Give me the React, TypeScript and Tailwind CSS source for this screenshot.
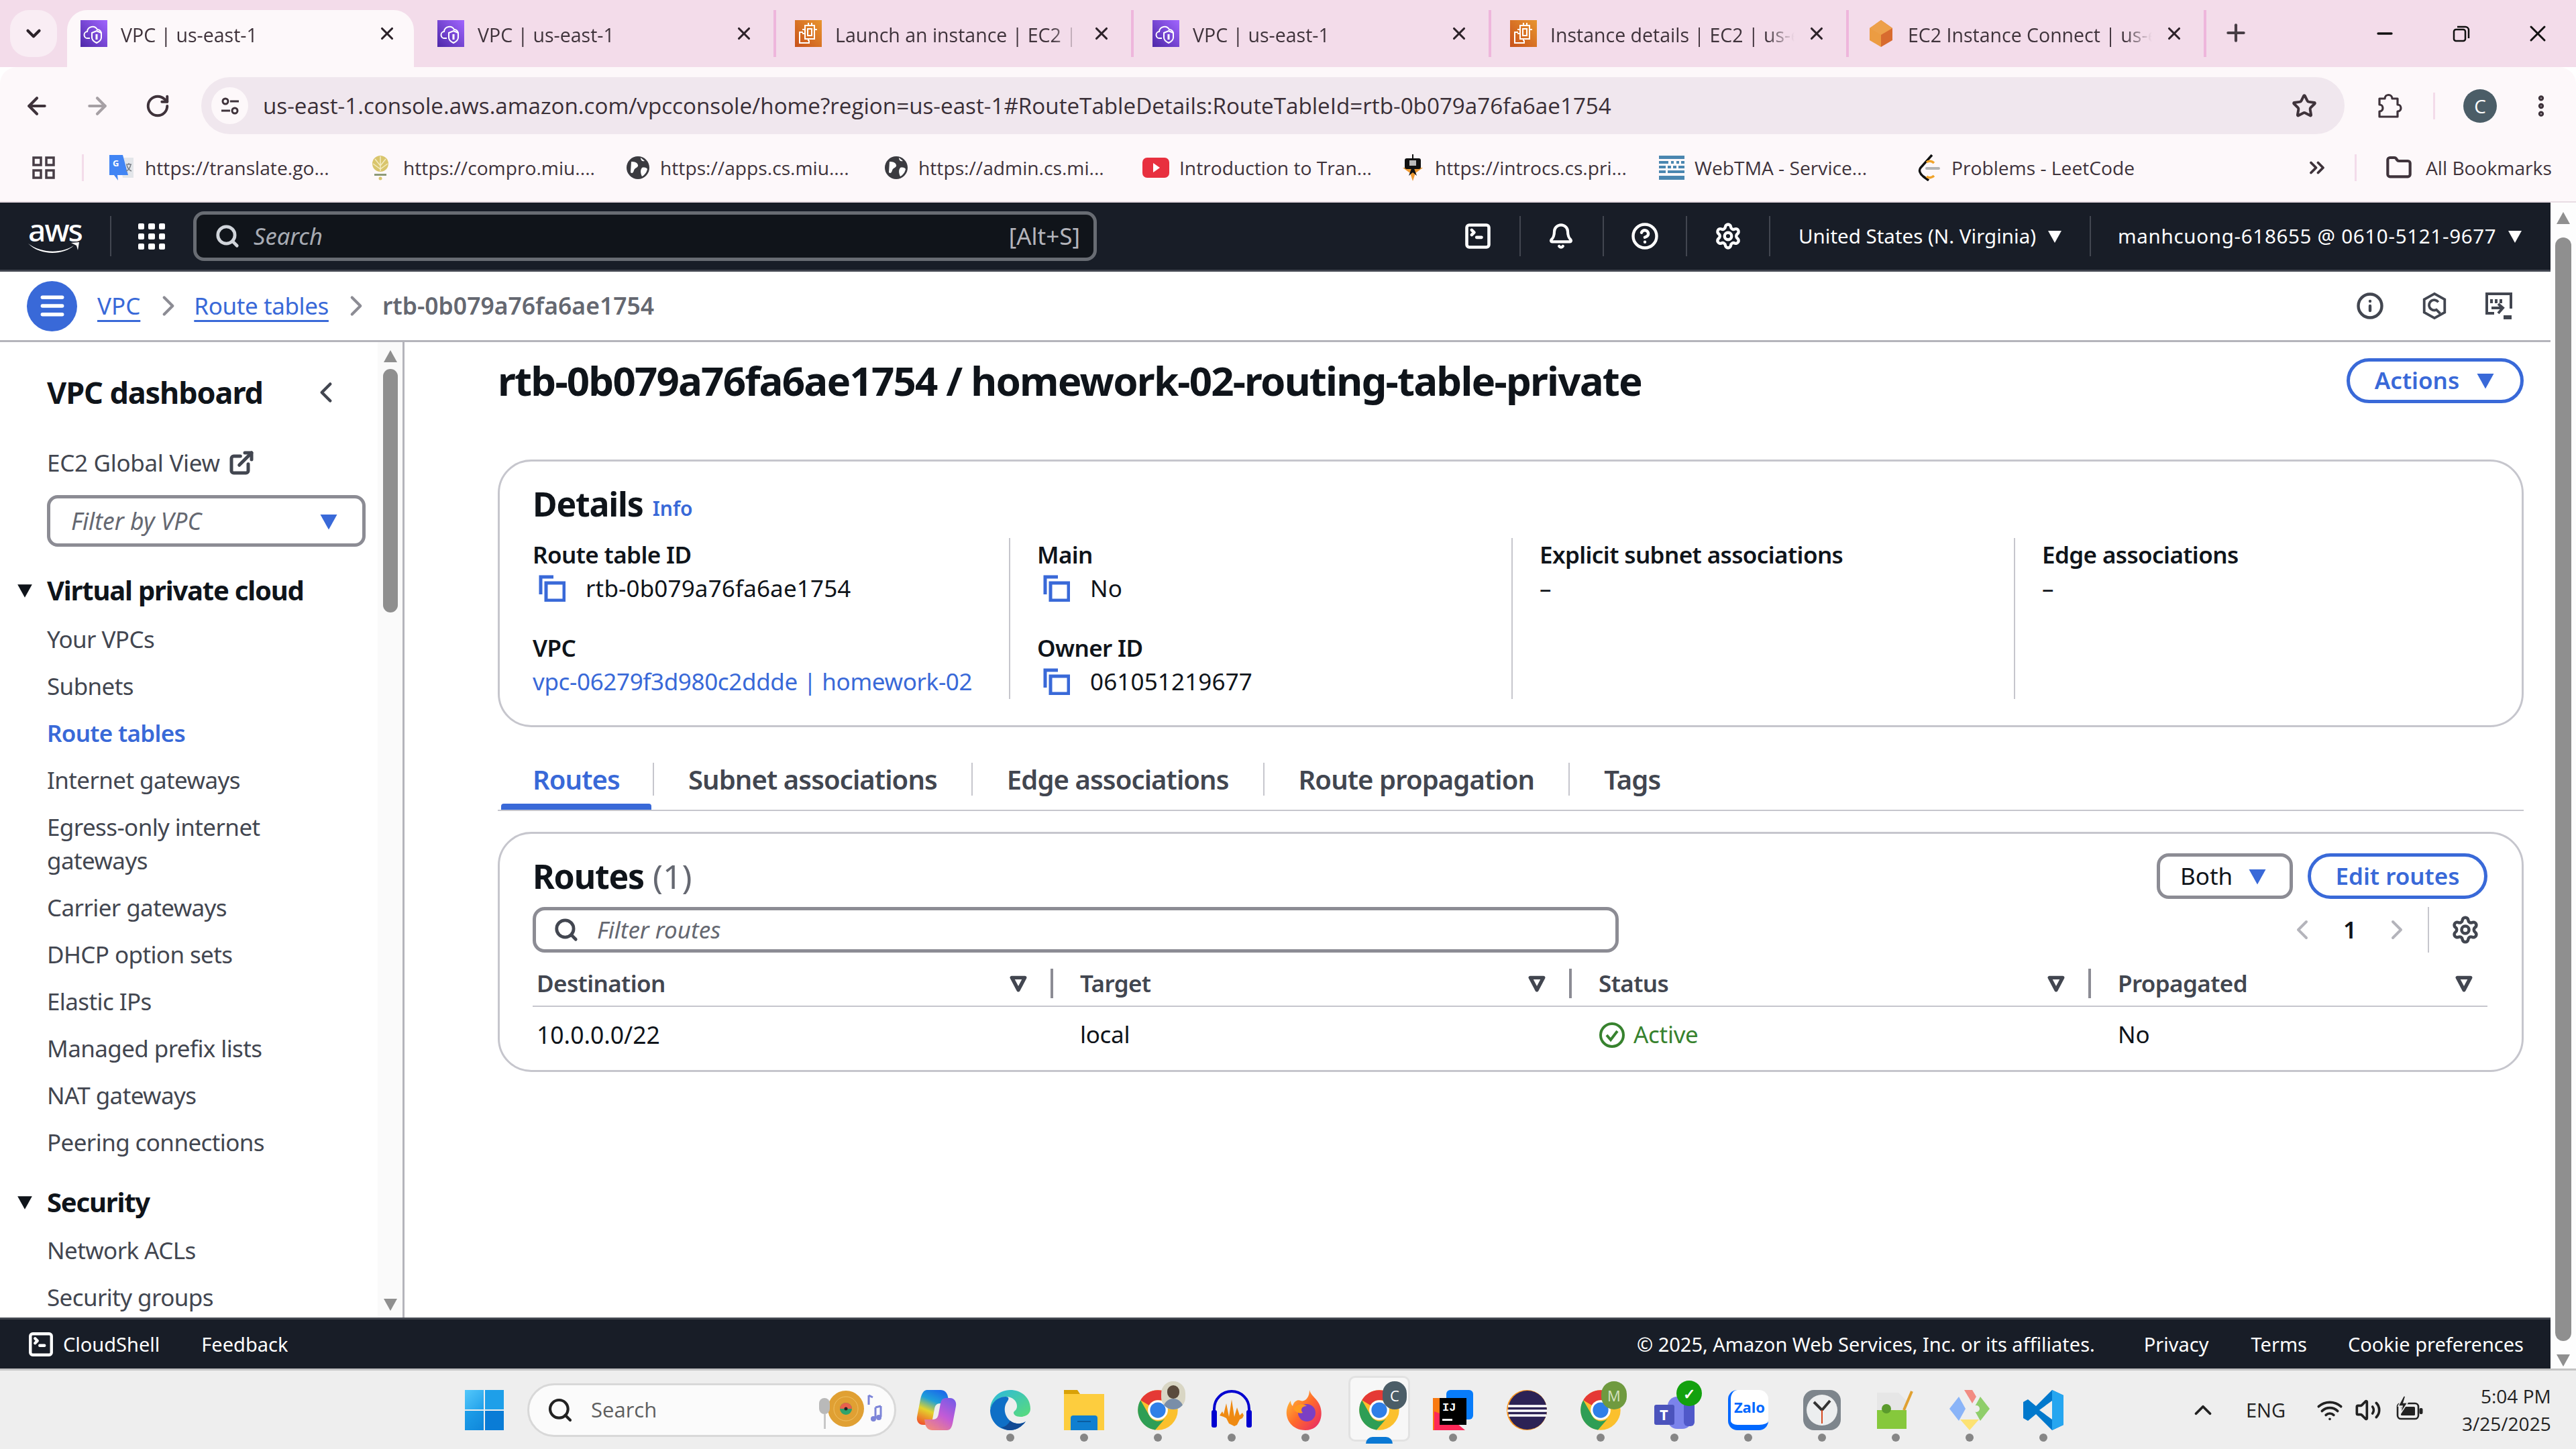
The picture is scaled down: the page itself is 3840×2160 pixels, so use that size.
import React from "react";
import {
    ArrowLeft, ArrowRight, Bell, ChevronLeft, ChevronRight, ChevronsRight, ChevronUp, ChevronDown,
    CircleHelp, EllipsisVertical, ExternalLink, Folder, Info, Menu, Plus, RotateCw, Search, Settings, SquareTerminal,
    Star, Volume2, Wifi, X, Minus,
} from "lucide-react";

const VpcIcon = () => (
    <svg viewBox="0 0 40 40" className="h-10 w-10 shrink-0">
        <defs>
            <linearGradient id="vpcg" x1="0" y1="1" x2="1" y2="0">
                <stop offset="0" stopColor="#4d27a8" />
                <stop offset="1" stopColor="#a166ff" />
            </linearGradient>
        </defs>
        <rect width="40" height="40" fill="url(#vpcg)" />
        <path d="M14 27H11a5 5 0 0 1-1-10 8 8 0 0 1 15-3 6 6 0 0 1 6 6" fill="none" stroke="#fff" strokeWidth="2" />
        <path d="M24 16l7 3v7c0 4-3 6-7 8-4-2-7-4-7-8v-7z" fill="none" stroke="#fff" strokeWidth="2" />
        <rect x="22.5" y="21" width="3" height="8" fill="#fff" />
    </svg>
);

const Ec2Icon = () => (
    <svg viewBox="0 0 40 40" className="h-10 w-10 shrink-0">
        <defs>
            <linearGradient id="ec2g" x1="0" y1="1" x2="1" y2="0">
                <stop offset="0" stopColor="#c8511b" />
                <stop offset="1" stopColor="#e8952f" />
            </linearGradient>
        </defs>
        <rect width="40" height="40" fill="url(#ec2g)" />
        <path d="M15 8h14v20H15z M20 4v4M25 4v4M20 28v3M11 14h4M11 20h4M29 14h4" fill="none" stroke="#fff" strokeWidth="2" />
        <path d="M12 18H7v16h14v-4" fill="none" stroke="#fff" strokeWidth="2" />
        <rect x="19" y="13" width="6" height="10" fill="none" stroke="#fff" strokeWidth="2" />
    </svg>
);

const CubeIcon = () => (
    <svg viewBox="0 0 40 40" className="h-10 w-10 shrink-0">
        <path d="M20 0L37 12V30L20 40z" fill="#d86b2f" />
        <path d="M20 0L3 12V30L20 40z" fill="#ec9c42" />
        <path d="M3 12L20 22 37 12 20 0z" fill="#eda04a" />
    </svg>
);

const GlobeIcon = () => (
    <svg viewBox="0 0 36 36" className="h-[36px] w-[36px] shrink-0">
        <circle cx="18" cy="18" r="17" fill="#3b3b40" />
        <path d="M8 9c5 0 9 1 10 5s-5 4-6 8-3 5-5 3M22 3c0 4 2 6 6 5M24 18c4-1 7 0 8 2-1 5-4 9-8 11-2-4-3-9 0-13z" fill="#fff" />
    </svg>
);

const AppsIcon = () => (
    <svg viewBox="0 0 34 34" className="h-[34px] w-[34px]" fill="none" stroke="#473d45" strokeWidth="3.5">
        <rect x="2" y="2" width="11" height="11" />
        <rect x="21" y="2" width="11" height="11" />
        <rect x="2" y="21" width="11" height="11" />
        <rect x="21" y="21" width="11" height="11" />
    </svg>
);

const TuneIcon = () => (
    <svg viewBox="0 0 30 30" className="h-[30px] w-[30px]" fill="none" stroke="#3f333b" strokeWidth="3">
        <circle cx="8" cy="8" r="4" />
        <path d="M15 8h13M2 22h13" />
        <circle cx="22" cy="22" r="4" />
    </svg>
);

const ExtensionIcon = () => (
    <svg viewBox="0 0 40 40" className="h-10 w-10" fill="none" stroke="#3f333b" strokeWidth="3.2" strokeLinejoin="round">
        <path d="M6 9h8a5.5 5.5 0 0 1 11 0h8v9a5 5 0 0 1 0 10v8H6v-8a5 5 0 0 0 0-10z" />
    </svg>
);

const BatteryIcon = () => (
    <svg viewBox="0 0 42 42" className="h-[42px] w-[42px]">
        <rect x="3" y="11" width="31" height="23" rx="5" fill="none" stroke="#222" strokeWidth="2.6" />
        <rect x="8" y="16" width="21" height="13" rx="1.5" fill="#222" />
        <rect x="35.5" y="18" width="5" height="9" rx="2" fill="#222" />
        <path d="M12 0L4 15h6l-3 12 11-17h-6l3-10z" fill="#222" stroke="#eee" strokeWidth="1.5" />
    </svg>
);

const BOOKMARK_ICONS = [
    <svg key="gt" viewBox="0 0 38 38" className="h-[38px] w-[38px] shrink-0">
        <path d="M14 4h22v30H20z" fill="#e3e6ea" />
        <path d="M0 0h20l8 30H12l1 8-6-8H0z" fill="#4285f4" />
        <text x="5" y="17" fontSize="13" fill="#fff" fontFamily="Noto Sans" fontWeight="700">G</text>
        <path d="M25 14h8M29 12v2M32 14c-1 5-4 9-7 10M26 15c1 4 4 8 7 9" fill="none" stroke="#7b8088" strokeWidth="1.5" />
    </svg>,
    <svg key="cp" viewBox="0 0 38 38" className="h-[38px] w-[38px] shrink-0">
        <circle cx="19" cy="13" r="12" fill="#d9c56c" />
        <path d="M19 2v22M11 6l8 10 8-10M8 13l11 8 11-8" stroke="#f4ecc2" strokeWidth="1.5" fill="none" />
        <rect x="10" y="28" width="18" height="3" fill="#8d9a78" />
        <circle cx="19" cy="35" r="2.5" fill="#d9c56c" />
    </svg>,
    <GlobeIcon key="g1" />,
    <GlobeIcon key="g2" />,
    <svg key="yt" viewBox="0 0 40 36" className="h-[36px] w-[40px] shrink-0">
        <rect y="3" width="40" height="30" rx="7" fill="#e8303f" />
        <path d="M16 11l10 7-10 7z" fill="#fff" />
    </svg>,
    <svg key="rk" viewBox="0 0 36 40" className="h-10 w-[36px] shrink-0">
        <path d="M3 20h30l-11 8 -4 12 -4-12z" fill="#ee9a32" />
        <path d="M18 16l6 16-6-5-6 5z" fill="#111" />
        <rect x="6" y="6" width="24" height="16" rx="3" fill="#111" />
        <rect x="13" y="9" width="10" height="8" fill="#bbb" />
        <rect x="17" y="0" width="2" height="6" fill="#111" />
    </svg>,
    <svg key="tm" viewBox="0 0 38 36" className="h-[36px] w-[38px] shrink-0" fill="#4a86b0">
        <rect width="38" height="5" />
        <path d="M0 8h14v4H0zM18 8h4v4h-4zM26 8h4v4h-4zM33 8h5v4h-5zM0 15h10v4H0zM13 15h5v4h-5zM21 15h5v4h-5zM29 15h9v4h-9zM0 22h10v4H0zM13 22h25v4H13zM0 30h38v6H0z" />
    </svg>,
    <svg key="lc" viewBox="0 0 36 40" className="h-10 w-[36px] shrink-0">
        <path d="M22 1L5 20c-3 4-1 9 4 13l8 6" fill="none" stroke="#111" strokeWidth="3.5" />
        <path d="M14 33c3 3 8 2 11-1" fill="none" stroke="#f0a32a" strokeWidth="3.5" />
        <path d="M14 12c3-3 8-2 11 1" fill="none" stroke="#f0a32a" strokeWidth="3.5" />
        <rect x="12" y="19" width="22" height="4" rx="2" fill="#b3b3b3" />
    </svg>,
];

const TABS: [React.ReactNode, string][] = [
    [<VpcIcon key="a" />, "VPC | us-east-1"],
    [<VpcIcon key="b" />, "VPC | us-east-1"],
    [<Ec2Icon key="c" />, "Launch an instance | EC2 | us-east-1"],
    [<VpcIcon key="d" />, "VPC | us-east-1"],
    [<Ec2Icon key="e" />, "Instance details | EC2 | us-east-1"],
    [<CubeIcon key="f" />, "EC2 Instance Connect | us-east-1"],
];

const BOOKMARKS = [
    "https://translate.go...",
    "https://compro.miu....",
    "https://apps.cs.miu....",
    "https://admin.cs.mi...",
    "Introduction to Tran...",
    "https://introcs.cs.pri...",
    "WebTMA - Service...",
];

function tabClass(i: number) {
    if (i === 0) return "flex h-[85px] w-[517px] items-center self-start rounded-t-[30px] bg-[#fdf8fa] pb-[15px] pl-[20px]";
    if (i === 1) return "ml-[15px] flex h-[70px] w-[525px] items-center border-r-[4px] border-[#eeb6dc] pl-[20px]";
    return "flex h-[70px] w-[533px] items-center border-r-[4px] border-[#eeb6dc] pl-[28px]";
}

const TabStrip = () => (
    <div className="flex h-[100px] shrink-0 items-start bg-[#f3dcea] pl-[15px] pt-[15px] font-['Open_Sans',sans-serif] text-[28.5px] text-[#3f333b]">
        <div className="flex h-[70px] w-[70px] items-center justify-center rounded-[28px] bg-[#f9edf4]">
            <ChevronDown size={34} strokeWidth={3} color="#2c2229" />
        </div>
        <div className="ml-[15px] flex h-[85px]">
            {TABS.map(([icon, title], i) => (
                <div key={i} className={tabClass(i)}>
                    {icon}
                    <span className="ml-5 mt-[4px] w-[379px] overflow-hidden whitespace-nowrap [mask-image:linear-gradient(to_right,black_85%,transparent_96%)]">{title}</span>
                    <X size={30} strokeWidth={2.5} color="#2c2229" className="ml-[3px] shrink-0" />
                </div>
            ))}
            <div className="flex w-[86px] items-start pl-[24px] pt-[14px]">
                <Plus size={40} strokeWidth={2.5} color="#473d45" />
            </div>
        </div>
        <div className="ml-auto flex h-[70px] items-center">
            <div className="flex w-[114px] justify-center"><Minus size={34} strokeWidth={2.5} color="#111" /></div>
            <div className="flex w-[114px] justify-center">
                <svg viewBox="0 0 30 30" className="h-[30px] w-[30px]" fill="none" stroke="#111" strokeWidth="2.5">
                    <rect x="4" y="9" width="17" height="17" rx="3" />
                    <path d="M9 5h12a5 5 0 0 1 5 5v12" />
                </svg>
            </div>
            <div className="flex w-[114px] justify-center"><X size={40} strokeWidth={1.8} color="#111" /></div>
        </div>
    </div>
);

const Toolbar = () => (
    <div className="flex h-[100px] shrink-0 items-start rounded-t-[25px] bg-[#fdf8fa] pt-[15px] font-['Open_Sans',sans-serif]">
        <div className="flex h-[85px] w-[300px] items-center text-[#3f333b]">
            <div className="flex w-[110px] justify-center"><ArrowLeft size={40} strokeWidth={2.5} color="#3f333b" /></div>
            <div className="flex w-[70px] justify-center"><ArrowRight size={40} strokeWidth={2.5} color="#a6a0a4" /></div>
            <div className="flex w-[110px] justify-center"><RotateCw size={38} strokeWidth={2.5} color="#3f333b" /></div>
        </div>
        <div className="flex h-[85px] w-[3195px] items-center rounded-full bg-[#f0e7ee] pl-[15px]">
            <div className="flex h-[55px] w-[55px] items-center justify-center rounded-full bg-[#fdf8fa]"><TuneIcon /></div>
            <span className="ml-[22px] whitespace-nowrap text-[33.2px] text-[#3a2f37]">us-east-1.console.aws.amazon.com/vpcconsole/home?region=us-east-1#RouteTableDetails:RouteTableId=rtb-0b079a76fa6ae1754</span>
            <Star size={38} strokeWidth={2.5} color="#3f333b" className="ml-auto mr-[41px]" />
        </div>
        <div className="flex h-[85px] flex-1 items-center">
            <div className="flex w-[132px] justify-center"><ExtensionIcon /></div>
            <div className="h-[40px] w-[3px] bg-[#f3dcea]" />
            <div className="ml-[42px] flex h-[50px] w-[50px] items-center justify-center rounded-full bg-[#4b5d67] text-[28px] text-white">C</div>
            <EllipsisVertical size={40} strokeWidth={3} color="#3f333b" className="ml-[46px]" />
        </div>
    </div>
);

const Bookmarks = () => (
    <div className="flex h-[100px] shrink-0 items-center bg-[#fdf8fa] pl-[48px] font-['Open_Sans',sans-serif] text-[28.2px] text-[#3f333b]">
        <AppsIcon />
        <div className="ml-[40px] mr-[38px] h-[40px] w-[3px] bg-[#f3dcea]" />
        {BOOKMARKS.map((b, i) => (
            <div key={b} className="flex w-[385px] items-center gap-[15px]">
                {BOOKMARK_ICONS[i]}
                <span className="whitespace-nowrap">{b}</span>
            </div>
        ))}
        <div className="flex w-[300px] items-center gap-[15px]">
            {BOOKMARK_ICONS[7]}
            <span className="whitespace-nowrap">Problems - LeetCode</span>
        </div>
        <ChevronsRight size={36} strokeWidth={2.5} color="#3f333b" className="ml-[278px]" />
        <div className="ml-[38px] h-[40px] w-[3px] bg-[#f3dcea]" />
        <Folder size={40} strokeWidth={2.5} color="#3f333b" className="ml-[43px]" />
        <span className="ml-[20px] whitespace-nowrap">All Bookmarks</span>
    </div>
);

const Caret = ({ className }: { className: string }) => (
    <svg viewBox="0 0 24 24" className={className}>
        <path d="M2 4h20L12 22z" />
    </svg>
);

const AwsBar = () => (
    <div className="flex h-[103px] shrink-0 items-center border-b-[3px] border-[#424650] bg-[#181d27] text-[29.5px] text-white">
        <div className="relative ml-[40px] flex h-[56px] w-[84px] flex-col items-center">
            <span className="text-[46px] font-medium leading-[36px] tracking-[-2px]">aws</span>
            <svg viewBox="0 0 80 20" className="absolute bottom-0 left-0 w-[80px]">
                <path d="M2 3c20 15 50 15 68 3-14 14-50 16-68-3zM66 2l12-1-2 12-2-7z" fill="#fff" />
            </svg>
        </div>
        <div className="ml-[40px] h-[60px] w-[2px] bg-[#424650]" />
        <div className="ml-[40px] grid w-[40px] grid-cols-3 gap-[6px]">
            {[0, 1, 2, 3, 4, 5, 6, 7, 8].map((n) => <div key={n} className="h-[9px] rounded-[2px] bg-white" />)}
        </div>
        <div className="ml-[42px] flex h-[74px] w-[1347px] items-center rounded-[16px] border-[5px] border-[#686c73] bg-[#10141a] pl-[27px] pr-[20px] text-[#b4b4bb]">
            <Search size={38} strokeWidth={3} color="#d1d5db" />
            <span className="ml-[20px] text-[34.5px] italic text-[#a7abb3]">Search</span>
            <span className="ml-auto text-[35px]">[Alt+S]</span>
        </div>
        <SquareTerminal size={44} strokeWidth={2.5} className="ml-[546px]" />
        <div className="ml-[40px] h-[60px] w-[2px] bg-[#424650]" />
        <Bell size={40} strokeWidth={2.5} className="ml-[40px]" />
        <div className="ml-[42px] h-[60px] w-[2px] bg-[#424650]" />
        <CircleHelp size={42} strokeWidth={2.5} className="ml-[40px]" />
        <div className="ml-[40px] h-[60px] w-[2px] bg-[#424650]" />
        <Settings size={42} strokeWidth={2.5} className="ml-[40px]" />
        <div className="ml-[40px] h-[60px] w-[2px] bg-[#424650]" />
        <span className="ml-[42px] whitespace-nowrap">United States (N. Virginia)</span>
        <Caret className="ml-[16px] w-[24px] fill-white" />
        <div className="ml-[40px] h-[60px] w-[2px] bg-[#424650]" />
        <span className="ml-[40px] whitespace-nowrap tracking-[0.7px]">manhcuong-618655 @ 0610-5121-9677</span>
        <Caret className="ml-[16px] w-[24px] fill-white" />
    </div>
);

const Breadcrumb = () => (
    <div className="flex h-[105px] shrink-0 items-center border-b-[3px] border-[#b4b4bb] bg-white pl-[40px] text-[35px]">
        <div className="flex h-[75px] w-[75px] items-center justify-center rounded-full bg-[#3969d8]">
            <Menu size={44} strokeWidth={3} color="#fff" />
        </div>
        <span className="ml-[30px] text-[#3969d8] underline decoration-[3px] underline-offset-[8px]">VPC</span>
        <ChevronRight size={50} strokeWidth={2} color="#8c8c94" className="ml-[17px]" />
        <span className="ml-[13px] tracking-[-0.4px] text-[#3969d8] underline decoration-[3px] underline-offset-[8px]">Route tables</span>
        <ChevronRight size={50} strokeWidth={2} color="#8c8c94" className="ml-[16px]" />
        <span className="ml-[14px] text-[35.5px] font-semibold text-[#656871]">rtb-0b079a76fa6ae1754</span>
        <Info size={42} strokeWidth={2.5} color="#424650" className="ml-auto" />
        <svg viewBox="0 0 40 44" className="ml-[55px] h-[42px] w-[40px]" fill="none" stroke="#424650" strokeWidth="4">
            <path d="M20 3l16 9v20l-16 9-16-9V12z" />
            <path d="M26 16a8 8 0 1 0-3 12l6 6" />
        </svg>
        <svg viewBox="0 0 42 42" className="ml-[55px] mr-[56px] h-[42px] w-[42px]" fill="none" stroke="#424650" strokeWidth="4">
            <path d="M14 32H3V3h36v22" />
            <path d="M10 11v6M17 11v6M24 11v6" />
            <path d="M10 24h16M20 18l7 6-7 8" />
            <path d="M28 38h12" strokeWidth="6" />
        </svg>
    </div>
);

const NavItem = ({ children, active }: { children: React.ReactNode; active?: boolean }) => (
    <div className={active ? "mb-[20px] ml-[46px] font-semibold leading-[50px] tracking-[-0.7px] text-[#3969d8]" : "mb-[20px] ml-[46px] leading-[50px] tracking-[-0.6px] text-[#424650]"}>{children}</div>
);

const Sidebar = () => (
    <div className="flex w-[603px] shrink-0 overflow-hidden border-r-[3px] border-[#b4b4bb]">
        <div className="w-[563px] shrink-0 pl-[24px] text-[35px]">
            <div className="ml-[46px] mr-[50px] mt-[50px] flex h-[50px] items-center justify-between">
                <span className="text-[45px] font-bold tracking-[-1.1px] text-[#0f141a]">VPC dashboard</span>
                <ChevronLeft size={50} strokeWidth={2.2} color="#424650" className="mr-[2px]" />
            </div>
            <div className="ml-[46px] mt-[55px] flex h-[50px] items-center gap-[12px] tracking-[-0.3px] text-[#424650]">
                EC2 Global View
                <ExternalLink size={40} strokeWidth={3} color="#424650" />
            </div>
            <div className="ml-[46px] mt-[23px] flex h-[77px] w-[475px] items-center rounded-[16px] border-[5px] border-[#8c8c94] pl-[31px] pr-[35px] text-[35.5px] italic text-[#656871]">
                Filter by VPC
                <Caret className="ml-auto w-[30px] fill-[#3969d8]" />
            </div>
            <div className="mb-[23px] mt-[40px] flex h-[50px] items-center text-[40px] font-bold tracking-[-1.2px] text-[#0f141a]">
                <Caret className="mr-[20px] w-[26px] fill-[#0f141a]" />
                Virtual private cloud
            </div>
            <NavItem>Your VPCs</NavItem>
            <NavItem>Subnets</NavItem>
            <NavItem active>Route tables</NavItem>
            <NavItem>Internet gateways</NavItem>
            <NavItem>Egress-only internet<br />gateways</NavItem>
            <NavItem>Carrier gateways</NavItem>
            <NavItem>DHCP option sets</NavItem>
            <NavItem>Elastic IPs</NavItem>
            <NavItem>Managed prefix lists</NavItem>
            <NavItem>NAT gateways</NavItem>
            <NavItem>Peering connections</NavItem>
            <div className="mb-[22px] mt-[39px] flex h-[50px] items-center text-[40px] font-bold tracking-[-1.2px] text-[#0f141a]">
                <Caret className="mr-[20px] w-[26px] fill-[#0f141a]" />
                Security
            </div>
            <NavItem>Network ACLs</NavItem>
            <NavItem>Security groups</NavItem>
        </div>
        <div className="flex w-[37px] flex-col items-center bg-[#fafafa] pt-[10px]">
            <Caret className="w-[24px] rotate-180 fill-[#8f8f8f]" />
            <div className="mt-[6px] h-[363px] w-[22px] rounded-full bg-[#8f8f8f]" />
            <Caret className="mb-[8px] mt-auto w-[24px] fill-[#8f8f8f]" />
        </div>
    </div>
);

const CopyIcon = () => (
    <svg viewBox="0 0 40 40" className="h-10 w-10 shrink-0" fill="none" stroke="#3969d8" strokeWidth="5">
        <path d="M22 3H3v26" />
        <rect x="11" y="12" width="27" height="26" />
    </svg>
);

const DetailCol = ({ first, children }: { first?: boolean; children: React.ReactNode }) => (
    <div className={first ? "pr-[20px]" : "border-l-2 border-[#c6c6cd] pl-[40px]"}>{children}</div>
);

const Label = ({ children }: { children: React.ReactNode }) => <div className="text-[35px] font-semibold leading-[50px] tracking-[-0.6px] text-[#0f141a]">{children}</div>;

const CopyValue = ({ children }: { children: React.ReactNode }) => (
    <div className="flex h-[50px] items-center pl-[9px] text-[#0f141a]">
        <CopyIcon />
        <span className="ml-[30px] tracking-[0.15px]">{children}</span>
    </div>
);

const DetailsCard = () => (
    <div className="mt-[78px] h-[399px] rounded-[50px] border-[3px] border-[#c6c6cd] pl-[49px] text-[35px]">
        <div className="flex h-[81px] items-center pt-[45px]">
            <span className="text-[50px] font-bold leading-none tracking-[-1.2px] text-[#0f141a]">Details</span>
            <span className="ml-[14px] mt-[12px] text-[30px] font-semibold text-[#3969d8]">Info</span>
        </div>
        <div className="mt-[33px] grid h-[240px] grid-cols-[710px_749px_749px_1fr]">
            <DetailCol first>
                <Label>Route table ID</Label>
                <CopyValue>rtb-0b079a76fa6ae1754</CopyValue>
                <div className="mt-[39px]"><Label>VPC</Label></div>
                <div className="whitespace-nowrap leading-[50px] tracking-[-0.35px] text-[#3969d8]">vpc-06279f3d980c2ddde | homework-02</div>
            </DetailCol>
            <DetailCol>
                <Label>Main</Label>
                <CopyValue>No</CopyValue>
                <div className="mt-[39px]"><Label>Owner ID</Label></div>
                <CopyValue>061051219677</CopyValue>
            </DetailCol>
            <DetailCol>
                <Label>Explicit subnet associations</Label>
                <div className="leading-[50px] text-[#0f141a]">–</div>
            </DetailCol>
            <DetailCol>
                <Label>Edge associations</Label>
                <div className="leading-[50px] text-[#0f141a]">–</div>
            </DetailCol>
        </div>
    </div>
);

const TabsRow = () => (
    <div className="mt-[41px] flex h-[84px] border-b-2 border-[#c6c6cd] text-[40px] font-semibold tracking-[-0.9px] text-[#424650]">
        <div className="flex w-[233px] flex-col">
            <div className="flex h-[73px] items-center">
                <div className="flex h-[49px] w-full items-center border-r-2 border-[#c6c6cd] pl-[52px] text-[#3969d8]">Routes</div>
            </div>
            <div className="ml-[5px] mr-[4px] h-[9px] rounded-t-[4px] bg-[#3969d8]" />
        </div>
        {["Subnet associations", "Edge associations", "Route propagation"].map((t) => (
            <div key={t} className="flex h-[73px] items-center">
                <div className="flex h-[49px] items-center whitespace-nowrap border-r-2 border-[#c6c6cd] px-[51px]">{t}</div>
            </div>
        ))}
        <div className="flex h-[73px] items-center pl-[51px]">Tags</div>
    </div>
);

const SortIcon = () => (
    <svg viewBox="0 0 24 24" className="h-[26px] w-[26px] shrink-0" fill="none" stroke="#424650" strokeWidth="5" strokeLinejoin="round">
        <path d="M3 4h18L12 21z" />
    </svg>
);

const HeaderCell = ({ first, pr, children }: { first?: boolean; pr: string; children: React.ReactNode }) => (
    <div className={first ? `flex h-[44px] items-center justify-between pl-[6px] ${pr}` : `flex h-[44px] items-center justify-between ${pr}`}>
        {!first && <div className="mr-[40px] h-[44px] w-[4px] shrink-0 bg-[#8c8c94]" />}
        <span className="mr-auto">{children}</span>
        <SortIcon />
    </div>
);

const RoutesCard = () => (
    <div className="mt-[31px] h-[358px] rounded-[50px] border-[3px] border-[#c6c6cd] pl-[49px] pr-[51px] pt-[29px] text-[35px]">
        <div className="flex h-[68px] items-center">
            <span className="text-[50px] font-bold tracking-[-1.2px] text-[#0f141a]">Routes</span>
            <span className="ml-[13px] text-[50px] text-[#656871]">(1)</span>
            <div className="ml-auto flex h-[68px] w-[203px] items-center rounded-[18px] border-[5px] border-[#8c8c94] pl-[30px] text-[#0f141a]">
                Both
                <Caret className="ml-[22px] w-[30px] fill-[#3969d8]" />
            </div>
            <div className="ml-[22px] flex h-[68px] w-[268px] items-center justify-center rounded-full border-[5px] border-[#3969d8] font-semibold text-[#3969d8]">Edit routes</div>
        </div>
        <div className="mt-[12px] flex h-[68px] items-center">
            <div className="flex h-[68px] w-[1619px] items-center rounded-[18px] border-[5px] border-[#8c8c94] pl-[26px] italic text-[#656871]">
                <Search size={38} strokeWidth={3} color="#424650" />
                <span className="ml-[27px] text-[35px]">Filter routes</span>
            </div>
            <ChevronLeft size={48} strokeWidth={2} color="#b4b4bb" className="ml-auto" />
            <span className="ml-[37px] font-semibold text-[#0f141a]">1</span>
            <ChevronRight size={48} strokeWidth={2} color="#b4b4bb" className="ml-[36px]" />
            <div className="ml-[22px] h-[68px] w-[2px] bg-[#c6c6cd]" />
            <Settings size={44} strokeWidth={2.5} color="#424650" className="ml-[32px] mr-[11px]" />
        </div>
        <div className="mt-[24px] grid h-[57px] grid-cols-[772px_773px_774px_1fr] items-start border-b-2 border-[#c6c6cd] font-semibold tracking-[-0.6px] text-[#424650]">
            <HeaderCell first pr="pr-[35px]">Destination</HeaderCell>
            <HeaderCell pr="pr-[35px]">Target</HeaderCell>
            <HeaderCell pr="pr-[35px]">Status</HeaderCell>
            <HeaderCell pr="pr-[22px]">Propagated</HeaderCell>
        </div>
        <div className="grid h-[80px] grid-cols-[772px_773px_774px_1fr] items-center pt-[3px] text-[#0f141a]">
            <div className="pl-[6px] text-[35.5px]">10.0.0.0/22</div>
            <div className="pl-[44px] tracking-[-0.3px]">local</div>
            <div className="flex items-center gap-[12px] pl-[44px] tracking-[-0.3px] text-[#37822e]">
                <svg viewBox="0 0 40 40" className="h-10 w-10" fill="none" stroke="#37822e" strokeWidth="4">
                    <circle cx="20" cy="20" r="17" />
                    <path d="M12 20l6 7 10-13" />
                </svg>
                Active
            </div>
            <div className="pl-[44px]">No</div>
        </div>
    </div>
);

const Main = () => (
    <div className="min-w-0 flex-1 bg-white pl-[139px] pr-[40px] pt-[17px]">
        <div className="flex h-[80px] items-center justify-between">
            <span className="whitespace-nowrap text-[60px] font-bold tracking-[-1.8px] text-[#0f141a]">rtb-0b079a76fa6ae1754 / homework-02-routing-table-private</span>
            <div className="flex h-[67px] w-[264px] items-center justify-center gap-[24px] rounded-full border-[5px] border-[#3969d8] text-[35px] font-semibold text-[#3969d8]">
                Actions
                <Caret className="w-[30px] fill-[#3969d8]" />
            </div>
        </div>
        <DetailsCard />
        <TabsRow />
        <RoutesCard />
    </div>
);

const Footer = () => (
    <div className="flex h-[76px] shrink-0 items-center border-t-[3px] border-[#424650] bg-[#181d27] pl-[40px] pr-[40px] text-[29px] text-white">
        <SquareTerminal size={42} strokeWidth={2.5} />
        <span className="ml-[12px]">CloudShell</span>
        <span className="ml-[62px]">Feedback</span>
        <span className="ml-auto">© 2025, Amazon Web Services, Inc. or its affiliates.</span>
        <span className="ml-[73px]">Privacy</span>
        <span className="ml-[63px]">Terms</span>
        <span className="ml-[61px]">Cookie preferences</span>
    </div>
);

const Chrome = () => (
    <svg viewBox="0 0 48 48" className="h-[62px] w-[62px]">
        <circle cx="24" cy="24" r="23" fill="#fbc02d" />
        <path d="M24 1a23 23 0 0 1 20 11.5H24a11.5 11.5 0 0 0-10 6L4 12.5A23 23 0 0 1 24 1z" fill="#e53935" />
        <path d="M4 12.5A23 23 0 0 0 21 46.8L32 34a11.5 11.5 0 0 1-18-4z" fill="#2e9e55" />
        <circle cx="24" cy="24" r="11.5" fill="#fff" />
        <circle cx="24" cy="24" r="9" fill="#2f7fe8" />
    </svg>
);

const TaskIcon = ({ children, dot = true }: { children: React.ReactNode; dot?: boolean }) => (
    <div className="relative flex h-full w-[110px] shrink-0 flex-col items-center justify-center">
        {children}
        {dot && <div className="absolute bottom-[11px] h-[12px] w-[12px] rounded-full bg-[#868686]" />}
    </div>
);

const Taskbar = () => (
    <div className="flex h-[120px] shrink-0 items-center border-t-[3px] border-[#c4c4c4] bg-[#eeeeee] pl-[693px] font-['Open_Sans',sans-serif]">
        <div className="grid h-[60px] w-[58px] grid-cols-2 grid-rows-2 gap-[2px]">
            <div className="bg-gradient-to-br from-[#52c8fb] to-[#1ea0ea]" />
            <div className="bg-[#1e9fe9]" />
            <div className="bg-gradient-to-br from-[#1ea0ea] to-[#0f86da]" />
            <div className="bg-[#0a7cd6]" />
        </div>
        <div className="ml-[35px] flex h-[80px] w-[550px] items-center rounded-full border-[3px] border-[#d8d8d8] bg-[#fbfbfb] pl-[26px]">
            <Search size={40} strokeWidth={2.5} color="#222" />
            <span className="ml-[26px] text-[31px] text-[#5f5f5f]">Search</span>
            <svg viewBox="0 0 110 60" className="ml-auto mr-[10px] h-[60px] w-[110px]">
                <circle cx="48" cy="28" r="27" fill="#e0a033" />
                <circle cx="48" cy="28" r="18" fill="none" stroke="#f0c060" />
                <circle cx="48" cy="28" r="9" fill="#2fa36b" />
                <path d="M39 28a9 9 0 0 1 18 0z" fill="#e8604c" />
                <circle cx="48" cy="28" r="2.5" fill="#222" />
                <rect x="8" y="12" width="16" height="24" rx="8" fill="#b9b9b9" />
                <rect x="15" y="36" width="3" height="22" fill="#c8c8c8" />
                <path d="M82 8v14M82 8l6 3M92 26v16M100 24v16M92 26l8-2" fill="none" stroke="#7c84d8" strokeWidth="3" />
                <circle cx="89" cy="43" r="4" fill="#7c84d8" />
                <circle cx="97" cy="41" r="4" fill="#7c84d8" />
            </svg>
        </div>
        <div className="ml-[5px] flex h-full items-center">
            <TaskIcon dot={false}>
                <svg viewBox="0 0 60 60" className="h-[60px] w-[60px]">
                    <defs>
                        <linearGradient id="cpa" x1="0.6" y1="0" x2="0.2" y2="1">
                            <stop offset="0" stopColor="#1b6fe8" />
                            <stop offset=".3" stopColor="#1fa0d8" />
                            <stop offset=".6" stopColor="#e4d32c" />
                            <stop offset="1" stopColor="#f0552c" />
                        </linearGradient>
                        <linearGradient id="cpb" x1="0.8" y1="0" x2="0.2" y2="1">
                            <stop offset="0" stopColor="#7a5be6" />
                            <stop offset=".5" stopColor="#c35bd6" />
                            <stop offset="1" stopColor="#f28a7c" />
                        </linearGradient>
                    </defs>
                    <path d="M16 0h20c6 0 10 4 11 10l2 10H36c-6 0-8 3-9 8l-3 16c-1 6-4 8-9 8H10C3 52 0 46 1 40l5-26C8 5 11 0 16 0z" fill="url(#cpa)" />
                    <path d="M44 60H24c-6 0-10-4-11-10l-1-6h12c6 0 8-3 9-8l3-16c1-6 4-8 9-8h5c7 0 10 6 9 12l-5 26c-2 9-5 10-10 10z" fill="url(#cpb)" />
                </svg>
            </TaskIcon>
            <TaskIcon>
                <svg viewBox="0 0 60 60" className="h-[60px] w-[60px]">
                    <defs>
                        <linearGradient id="edg" x1="0" y1="0" x2="1" y2="1">
                            <stop offset="0" stopColor="#2bb8e0" />
                            <stop offset="1" stopColor="#5bdc78" />
                        </linearGradient>
                    </defs>
                    <path d="M30 0c18 0 30 13 30 28 0 8-7 12-15 12-6 0-10-3-10-6 0-3 5-3 5-10 0-8-7-14-17-14C12 10 2 20 0 30 0 14 12 0 30 0z" fill="url(#edg)" />
                    <path d="M0 30c2-12 12-20 23-20 6 0 5 4 2 8-6 8-4 24 8 30 6 3 14 3 20-1-6 8-14 13-23 13C12 60 0 46 0 30z" fill="#0f6fc6" />
                    <path d="M30 46c8 6 18 5 23 1-6 8-14 13-23 13-6 0-10-2-14-5 6 1 10-3 14-9z" fill="#114a94" />
                </svg>
            </TaskIcon>
            <TaskIcon>
                <svg viewBox="0 0 60 60" className="h-[60px] w-[60px]">
                    <path d="M0 0h20l4 6h36v8H0z" fill="#d9a106" />
                    <path d="M0 6h60v54H0z" fill="#fdcd3e" />
                    <path d="M10 60V42a4 4 0 0 1 4-4h32a4 4 0 0 1 4 4v18z" fill="#0f7fd0" />
                    <rect x="20" y="46" width="20" height="2" fill="#0a5da0" />
                </svg>
            </TaskIcon>
            <TaskIcon>
                <Chrome />
                <div className="absolute right-[14px] top-[16px] h-[42px] w-[36px] overflow-hidden rounded-full bg-[#d9d6c4]">
                    <div className="mx-auto mt-[6px] h-[20px] w-[18px] rounded-full bg-[#5a4a3c]" />
                    <div className="mx-auto h-[16px] w-[30px] rounded-t-full bg-[#7a8ea8]" />
                </div>
            </TaskIcon>
            <TaskIcon>
                <svg viewBox="0 0 60 60" className="h-[60px] w-[60px]">
                    <path d="M4 44V28a26 26 0 0 1 52 0v16" fill="none" stroke="#0000d0" strokeWidth="4" />
                    <rect x="0" y="30" width="8" height="26" rx="3" fill="#0000d0" />
                    <rect x="52" y="30" width="8" height="26" rx="3" fill="#0000d0" />
                    <path d="M12 38l4-6 2 4 4-16 4 20 4-26 4 26 4-14 4 12 4-4 2 4-2 4-4 2-4 8-4 2-4-2-4-2-4-8-4-2z" fill="#ef8a12" />
                </svg>
            </TaskIcon>
            <TaskIcon>
                <svg viewBox="0 0 60 60" className="h-[60px] w-[60px]">
                    <defs>
                        <linearGradient id="ffx" x1="0" y1="0" x2="1" y2="1">
                            <stop offset="0" stopColor="#ffd23a" />
                            <stop offset=".5" stopColor="#ff6a2b" />
                            <stop offset="1" stopColor="#e6236e" />
                        </linearGradient>
                    </defs>
                    <path d="M36 0c2 8 8 10 14 20 8 14 4 40-20 40C10 60 0 44 2 30c1-6 3-10 6-14 0 4 1 6 3 8 2-8 8-10 12-8 6 2 13-4 13-16z" fill="url(#ffx)" />
                    <circle cx="32" cy="34" r="13" fill="#7b3fc4" />
                    <path d="M12 28c6-8 14-8 20-4-8 0-10 6-6 10-6 2-12-2-14-6z" fill="#ff9a1f" />
                </svg>
            </TaskIcon>
            <div className="relative flex h-full w-[110px] shrink-0 items-center justify-center">
                <div className="absolute left-[9px] top-[8px] h-[98px] w-[92px] rounded-[10px] border-[3px] border-[#e2e2e2] bg-[#f7f7f7]" />
                <div className="relative"><Chrome /></div>
                <div className="absolute right-[14px] top-[16px] flex h-[42px] w-[36px] items-center justify-center rounded-full bg-[#4b5d67] text-[22px] text-white">C</div>
                <div className="absolute bottom-[8px] h-[10px] w-[40px] rounded-t-full bg-[#0a78d4]" />
            </div>
            <TaskIcon>
                <svg viewBox="0 0 60 60" className="h-[60px] w-[60px]">
                    <rect x="20" y="0" width="40" height="44" rx="6" fill="#087cfa" />
                    <rect x="0" y="12" width="24" height="48" fill="#f97a12" />
                    <path d="M2 60V32l22 8 24 20z" fill="#fe2857" />
                    <rect x="10" y="12" width="40" height="40" fill="#000" />
                    <text x="14" y="31" fontSize="17" fontWeight="700" fill="#fff" fontFamily="Liberation Mono">IJ</text>
                    <rect x="14" y="43" width="15" height="3" fill="#fff" />
                </svg>
            </TaskIcon>
            <TaskIcon dot={false}>
                <svg viewBox="0 0 60 60" className="h-[60px] w-[60px]">
                    <circle cx="30" cy="30" r="30" fill="#f7941e" />
                    <circle cx="31" cy="30" r="29" fill="#2c2255" />
                    <path d="M2 24h58M1 31h60M3 38h56" stroke="#fff" strokeWidth="3.5" />
                </svg>
            </TaskIcon>
            <TaskIcon>
                <Chrome />
                <div className="absolute right-[16px] top-[16px] flex h-[42px] w-[38px] items-center justify-center rounded-full bg-[#6f9a3f] text-[22px] text-[#d5e0c0]">M</div>
            </TaskIcon>
            <TaskIcon>
                <svg viewBox="0 0 60 60" className="h-[60px] w-[60px]">
                    <circle cx="38" cy="30" r="15" fill="#7b83eb" />
                    <rect x="20" y="10" width="36" height="48" rx="14" fill="#7b83eb" />
                    <rect x="44" y="14" width="16" height="40" rx="6" fill="#5059c9" />
                    <rect x="0" y="22" width="30" height="30" rx="3" fill="#4b53bc" />
                    <text x="8" y="45" fontSize="22" fontWeight="700" fill="#fff" fontFamily="Noto Sans">T</text>
                </svg>
                <div className="absolute right-[14px] top-[15px] flex h-[38px] w-[38px] items-center justify-center rounded-full bg-[#13a10e] text-[22px] font-bold text-white">✓</div>
            </TaskIcon>
            <TaskIcon>
                <div className="flex h-[60px] w-[60px] items-center justify-center rounded-[14px] border-b-[8px] border-l-[4px] border-[#0068ff] bg-white font-['Noto_Sans'] text-[22px] font-bold text-[#0068ff]">Zalo</div>
            </TaskIcon>
            <TaskIcon>
                <svg viewBox="0 0 60 60" className="h-[60px] w-[60px]">
                    <rect x="2" y="0" width="56" height="60" rx="16" fill="#7d858c" />
                    <circle cx="30" cy="30" r="23" fill="#eceeef" />
                    <path d="M30 30L18 18M30 30l12-14" stroke="#333" strokeWidth="4" />
                    <path d="M30 30v20" stroke="#d8491f" strokeWidth="2" />
                </svg>
            </TaskIcon>
            <TaskIcon>
                <svg viewBox="0 0 60 60" className="h-[60px] w-[60px]">
                    <path d="M2 4h32l12 12v42H2z" fill="#e6e6e6" />
                    <path d="M2 30h44v28H2z" fill="#86c83c" />
                    <circle cx="16" cy="28" r="7" fill="#5a9a2c" />
                    <path d="M42 30L54 2" stroke="#e0a030" strokeWidth="4" />
                </svg>
            </TaskIcon>
            <TaskIcon>
                <svg viewBox="0 0 60 60" className="h-[60px] w-[60px]">
                    <path d="M22 0h12l6 10-6 10-6-10z" fill="#f28b82" />
                    <path d="M0 28l14-18 10 18-10 18z" fill="#8ab4f8" />
                    <path d="M36 28l10-18 14 18-14 18z" fill="#8fce6a" />
                    <path d="M16 44h28l-14 16z" fill="#fde272" />
                    <circle cx="40" cy="28" r="5" fill="#eee" />
                </svg>
            </TaskIcon>
            <TaskIcon>
                <svg viewBox="0 0 60 60" className="h-[60px] w-[60px]">
                    <path d="M43 0l17 8v44l-17 8-24-24L7 46 0 42V18l7-4 12 10z" fill="#0078cc" />
                    <path d="M43 0l17 8v44l-17 8z" fill="#26a6f0" />
                    <path d="M43 16v28L24 30z" fill="#eeeeee" />
                </svg>
            </TaskIcon>
        </div>
        <ChevronUp size={42} strokeWidth={2.2} color="#222" className="ml-[162px]" />
        <span className="ml-[43px] text-[29px] text-[#222]">ENG</span>
        <Wifi size={40} strokeWidth={2.2} color="#222" className="ml-[46px]" />
        <Volume2 size={40} strokeWidth={2.2} color="#222" className="ml-[17px]" />
        <div className="ml-[21px]"><BatteryIcon /></div>
        <div className="ml-[57px] flex flex-col items-end text-[28px] leading-[41px] text-[#222]">
            <span>5:04 PM</span>
            <span>3/25/2025</span>
        </div>
    </div>
);

const App: React.FC = () => {
    return (
        <div className="flex h-[2160px] w-[3840px] flex-col overflow-hidden bg-white font-['Noto_Sans',sans-serif]">
            <TabStrip />
            <Toolbar />
            <Bookmarks />
            <div className="h-[2px] shrink-0 bg-[#e8dde4]" />
            <div className="flex min-h-0 flex-1">
                <div className="flex w-[3802px] shrink-0 flex-col">
                    <AwsBar />
                    <Breadcrumb />
                    <div className="flex min-h-0 flex-1">
                        <Sidebar />
                        <Main />
                    </div>
                    <Footer />
                </div>
                <div className="flex w-[38px] flex-col items-center bg-[#fdfdfd] pt-[12px]">
                    <Caret className="w-[24px] rotate-180 fill-[#8f8f8f]" />
                    <div className="mt-[16px] h-[1645px] w-[24px] rounded-full bg-[#8f8f8f]" />
                    <Caret className="mt-[16px] w-[24px] fill-[#8f8f8f]" />
                </div>
            </div>
            <Taskbar />
        </div>
    );
};

export default App;
